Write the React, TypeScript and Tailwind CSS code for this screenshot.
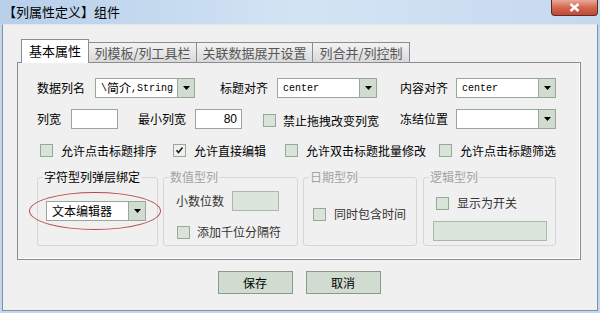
import type { ReactNode } from "react";

const cjk = "font-['Noto_Sans_CJK_SC','Noto_Sans_CJK_JP',sans-serif]";
const mono = "font-['Liberation_Mono','Noto_Sans_CJK_SC',monospace]";

function Arrow() {
  return (
    <svg width="7" height="4" viewBox="0 0 7 4">
      <path d="M0 0h7L3.5 4z" fill="#000" />
    </svg>
  );
}

function Combo({ children, w = "w-[100px]" }: { children?: ReactNode; w?: string }) {
  return (
    <div className={`flex h-[20px] ${w} border border-[#98a898] bg-white`}>
      <div className="flex flex-1 items-center overflow-hidden pl-[5px] whitespace-nowrap">{children}</div>
      <div className="flex w-[17px] items-center justify-center border-l border-[#98a898] bg-[#cfdccf]">
        <Arrow />
      </div>
    </div>
  );
}

function Check({ checked = false }: { checked?: boolean }) {
  return (
    <div
      className={`flex h-[13px] w-[13px] shrink-0 items-center justify-center border border-[#98a898] ${
        checked ? "bg-[#eef1ee]" : "bg-[#d9e4d9]"
      }`}
    >
      {checked && (
        <svg width="9" height="9" viewBox="0 0 9 9">
          <path d="M1.5 4.2l2 2.3 4-5" fill="none" stroke="#1b1b1b" strokeWidth="1.6" />
        </svg>
      )}
    </div>
  );
}

function Group({ title, disabled, w, className = "", children }: { title: string; disabled?: boolean; w: string; className?: string; children: ReactNode }) {
  return (
    <fieldset className={`h-[76px] ${w} rounded-[3px] border border-[#d6d6d6] ${className}`}>
      <legend className={`ml-[5px] px-[1px] leading-[14px] ${disabled ? "text-[#a3a3a3]" : "text-black"}`}>{title}</legend>
      {children}
    </fieldset>
  );
}

const tabs = ["列模板/列工具栏", "关联数据展开设置", "列合并/列控制"];
const tabWidths = ["w-[108px]", "w-[116px]", "w-[97px]"];

export default function App() {
  return (
    <div className={`flex h-[313px] w-[600px] flex-col overflow-hidden bg-[#c3d7ed] text-[12px] text-black ${cjk}`}>
      {/* title bar */}
      <div className="flex h-[24px] shrink-0 justify-between bg-gradient-to-r from-[#b7cfe9] via-[#d3e4f4] to-[#c5d9ee]">
        <div className="pl-[3px] pt-[4px] text-[13px] leading-[16px]">【列属性定义】组件</div>
        <div className="mr-[2px] flex h-[16px] w-[47px] items-center justify-center rounded-b-[4px] border border-t-0 border-[#5b2a22] bg-gradient-to-b from-[#e9a999] via-[#d26650] to-[#c24a34]">
          <svg width="11" height="9" viewBox="0 0 11 9">
            <path d="M1.5 1l8 7M9.5 1l-8 7" stroke="#fff" strokeWidth="2.4" />
          </svg>
        </div>
      </div>

      {/* client area */}
      <div className="mx-[2px] flex h-[287px] flex-col border border-t-[#dfe8f2] border-[#7e90a6] bg-[#f0f0f0]">
        {/* tabs */}
        <div className="relative z-10 ml-[14px] mt-[13px] flex h-[24px] items-end">
          <div className="-mb-px ml-[4px] flex h-[24px] w-[68px] items-center justify-center border border-b-0 border-[#898c95] bg-white pb-[1px] text-[13px]">
            基本属性
          </div>
          {tabs.map((t, i) => (
            <div
              key={t}
              className={`flex h-[20px] ${tabWidths[i]} items-center justify-center border border-b-0 border-l-0 border-[#898c95] bg-gradient-to-b from-[#f3f3f3] to-[#d9d9d9] text-[#575757] text-[13px]`}
            >
              {t}
            </div>
          ))}
        </div>

        {/* panel */}
        <div className="ml-[14px] flex h-[198px] w-[564px] flex-col border border-[#898c95] bg-[#f0f0f0] shadow-[inset_-1px_-1px_0_#ffffff]">
          {/* row 1 */}
          <div className="mt-[15px] flex h-[20px] items-center pl-[19px]">
            <span className="w-[58px]">数据列名</span>
            <Combo>
              <span className={`${mono} text-[10px]`}>\</span>
              <span className="text-[12px]">简介</span>
              <span className={`${mono} text-[10px]`}>,String</span>
            </Combo>
            <span className="ml-[25px] w-[57px]">标题对齐</span>
            <Combo>
              <span className={`${mono} text-[10px]`}>center</span>
            </Combo>
            <span className="ml-[23px] w-[56px]">内容对齐</span>
            <Combo>
              <span className={`${mono} text-[10px]`}>center</span>
            </Combo>
          </div>

          {/* row 2 */}
          <div className="mt-[11px] flex h-[20px] items-center pl-[19px]">
            <span className="w-[34px]">列宽</span>
            <div className="h-[20px] w-[47px] border border-[#98a898] bg-white" />
            <span className="ml-[20px] w-[57px]">最小列宽</span>
            <div className="flex h-[20px] w-[47px] items-center justify-end border border-[#98a898] bg-white pr-[4px] font-['Liberation_Sans',sans-serif]">
              80
            </div>
            <div className="ml-[21px] flex w-[137px] items-center pt-[3px]">
              <Check />
              <span className="ml-[7px]">禁止拖拽改变列宽</span>
            </div>
            <span className="w-[56px]">冻结位置</span>
            <Combo />
          </div>

          {/* row 3 */}
          <div className="mt-[15px] flex h-[13px] items-center pl-[22px]">
            <div className="flex w-[133px] items-center">
              <Check />
              <span className="ml-[8px]">允许点击标题排序</span>
            </div>
            <div className="flex w-[112px] items-center">
              <Check checked />
              <span className="ml-[8px]">允许直接编辑</span>
            </div>
            <div className="flex w-[154px] items-center">
              <Check />
              <span className="ml-[8px]">允许双击标题批量修改</span>
            </div>
            <div className="flex items-center">
              <Check />
              <span className="ml-[8px]">允许点击标题筛选</span>
            </div>
          </div>

          {/* groups */}
          <div className="mt-[13px] flex pl-[19px]">
            <Group title="字符型列弹层绑定" w="w-[121px]">
              <div className="relative ml-[8px] mt-[17px] w-[100px]">
                <Combo w="w-[100px]">
                  <span className="text-[12px]">文本编辑器</span>
                </Combo>
                <div className="absolute left-[-17px] top-[-9px] h-[38px] w-[132px] rounded-[50%] border border-[#b8474a]" />
              </div>
            </Group>

            <Group title="数值型列" disabled w="w-[135px]" className="ml-[5px]">
              <div className="ml-[12px] mt-[7px] flex items-center">
                <span className="w-[56px] text-[#333]">小数位数</span>
                <div className="h-[20px] w-[47px] border border-[#aab9aa] bg-[#dbe5db]" />
              </div>
              <div className="ml-[13px] mt-[12px] flex items-center">
                <Check />
                <span className="ml-[7px] text-[#333]">添加千位分隔符</span>
              </div>
            </Group>

            <Group title="日期型列" disabled w="w-[114px]" className="ml-[5px]">
              <div className="ml-[9px] mt-[21px] flex items-center">
                <Check />
                <span className="ml-[8px] text-[#333]">同时包含时间</span>
              </div>
            </Group>

            <Group title="逻辑型列" disabled w="w-[133px]" className="ml-[6px]">
              <div className="ml-[12px] mt-[10px] flex items-center">
                <Check />
                <span className="ml-[8px] text-[#333]">显示为开关</span>
              </div>
              <div className="ml-[9px] mt-[9px] h-[20px] w-[114px] border border-[#aab9aa] bg-[#dbe5db]" />
            </Group>
          </div>
        </div>

        {/* buttons */}
        <div className="mt-[11px] flex justify-center gap-[13px] pr-[2px]">
          <button className="h-[23px] w-[75px] border border-[#8a9a8a] bg-[#cfdccf] text-[12px]">保存</button>
          <button className="h-[23px] w-[75px] border border-[#8a9a8a] bg-[#cfdccf] text-[12px]">取消</button>
        </div>
      </div>
    </div>
  );
}
